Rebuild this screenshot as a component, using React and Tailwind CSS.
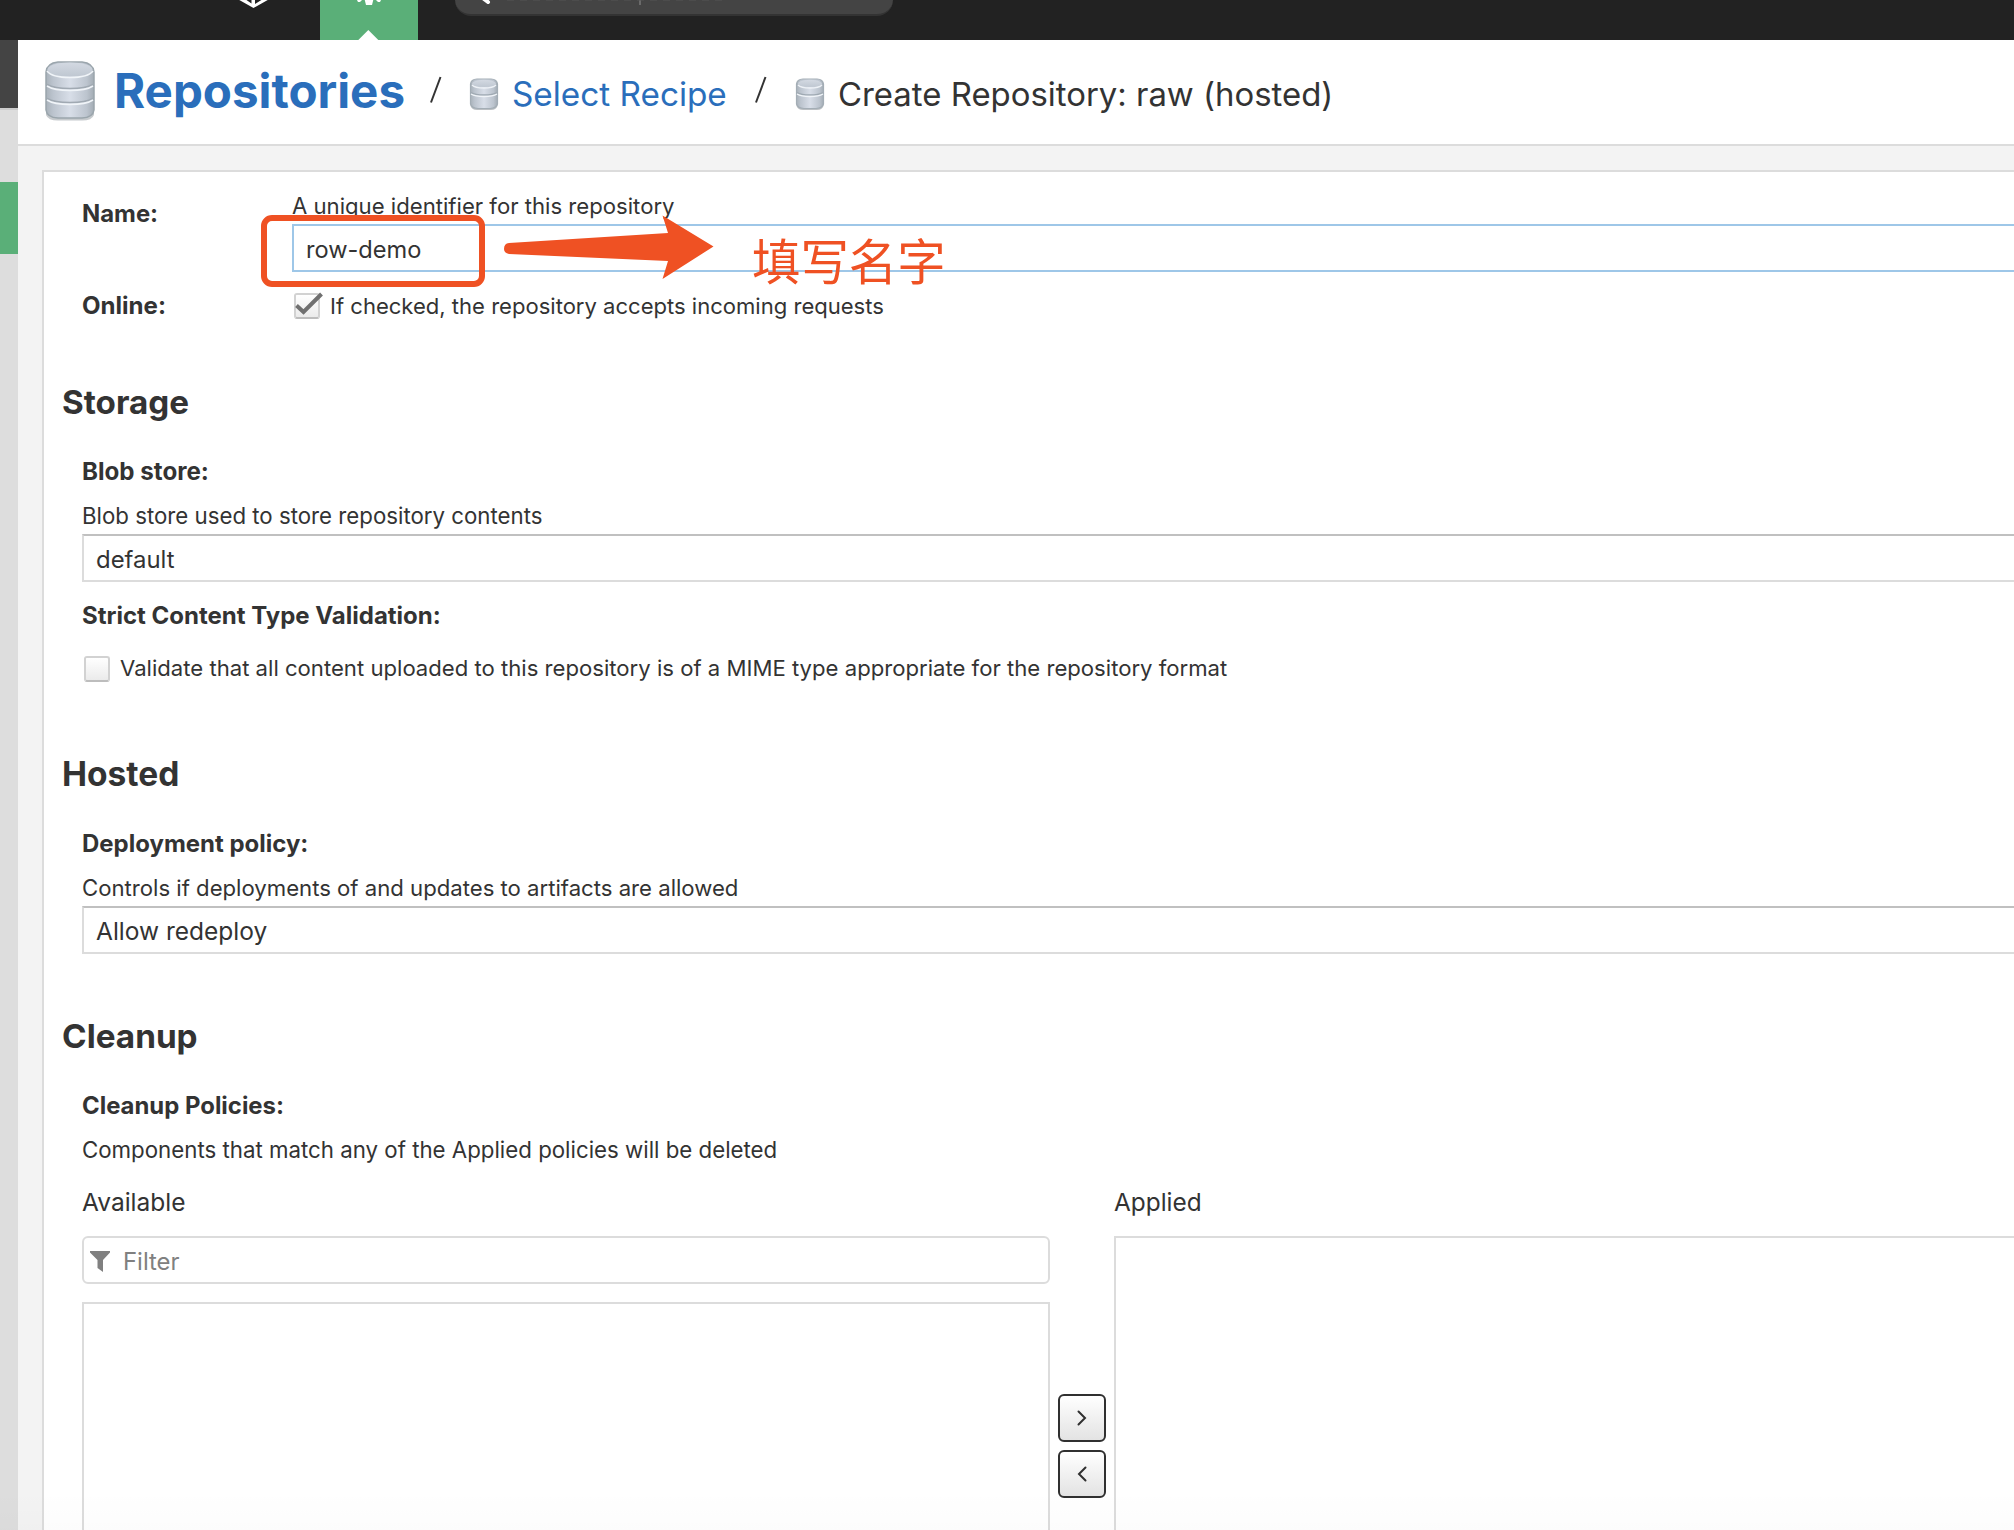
import React from "react";

function Database({ className, bands = 3 }) {
  const three = bands === 3;
  return three ? (
    <svg className={className} viewBox="0 0 52 62" fill="none">
      <defs>
        <linearGradient id="dbBody" x1="0" x2="1" y1="0" y2="0">
          <stop offset="0" stopColor="#a9b2ba" />
          <stop offset="0.15" stopColor="#bcc4ce" />
          <stop offset="0.5" stopColor="#d8dee8" />
          <stop offset="0.85" stopColor="#bcc4ce" />
          <stop offset="1" stopColor="#a3acb4" />
        </linearGradient>
        <linearGradient id="dbTop" x1="0" x2="0" y1="0" y2="1">
          <stop offset="0" stopColor="#d3d9e2" />
          <stop offset="1" stopColor="#bfc7d1" />
        </linearGradient>
      </defs>
      <path d="M2 50 H50 V55 Q48 60.500 38 60.500 H14 Q4 60.500 2 55Z" fill="#8d959b" opacity="0.5" />
      <path d="M2 12 Q3 3 14 2 H38 Q49 3 50 12 V50 Q49 57.500 38 58 H14 Q3 57.500 2 50Z" fill="url(#dbBody)" stroke="#9aa5ac" strokeWidth="1.500" />
      <ellipse cx="26" cy="9.500" rx="22.500" ry="7" fill="url(#dbTop)" />
      <path d="M3 11 Q8 17.500 26 17.500 Q44 17.500 49 11" stroke="#f0f4f8" strokeWidth="1.600" />
      <path d="M3 24.500 Q10 28.500 26 28.500 Q42 28.500 49 24.500" stroke="#a0a9b2" strokeWidth="1.600" />
      <path d="M3 26 Q10 30.500 26 30.500 Q42 30.500 49 26" stroke="#f0f4f8" strokeWidth="1.600" />
      <path d="M3 38.500 Q10 42.500 26 42.500 Q42 42.500 49 38.500" stroke="#a0a9b2" strokeWidth="1.600" />
      <path d="M3 40 Q10 44.500 26 44.500 Q42 44.500 49 40" stroke="#f0f4f8" strokeWidth="1.600" />
    </svg>
  ) : (
    <svg className={className} viewBox="0 0 30 33" fill="none">
      <path d="M1.500 26 H28.500 V28 Q27 32 22 32 H8 Q3 32 1.500 28Z" fill="#8d959b" opacity="0.6" />
      <path d="M1.500 6 Q2 1.200 8 1 H22 Q28 1.200 28.500 6 V26 Q27 30.500 21 30.500 H9 Q3 30.500 1.500 26Z" fill="url(#dbBody)" stroke="#a3adb5" strokeWidth="1.200" />
      <ellipse cx="15" cy="5.500" rx="12" ry="3.600" fill="url(#dbTop)" />
      <path d="M3 7 Q6 10 15 10 Q24 10 27 7" stroke="#edf1f6" strokeWidth="1.300" />
      <path d="M2 14.500 Q6 17 15 17 Q24 17 28 14.500" stroke="#9fa9b2" strokeWidth="1.300" />
      <path d="M2 16 Q6 18.500 15 18.500 Q24 18.500 28 16" stroke="#f0f4f8" strokeWidth="1.400" />
    </svg>
  );
}

function Checkbox({ checked }) {
  return (
    <span className="relative block size-[26px] shrink-0 rounded-[3px] border-2 border-[#d2d2d2] border-b-[#bdbdbd] bg-linear-to-b from-white to-[#ebebeb]">
      {checked && (
        <svg className="absolute -left-[2px] -top-[3px] h-[28px] w-[30px]" viewBox="0 0 30 28" fill="none">
          <path d="M2.500 13.500 L9.500 20 L27.500 2" stroke="#707070" strokeWidth="4" />
        </svg>
      )}
    </span>
  );
}

function Heading({ children, className }) {
  return <h2 className={`-ml-5 h-10 whitespace-nowrap font-bold leading-10 ${className}`}>{children}</h2>;
}

function Label({ children, className }) {
  return <div className={`h-8 whitespace-nowrap font-bold leading-8 ${className}`}>{children}</div>;
}

function Help({ children, className }) {
  return <div className={`h-8 whitespace-nowrap leading-8 ${className}`}>{children}</div>;
}

function Field({ children, focused, className }) {
  const border = focused ? "border-[#9ec7e8]" : "border-[#dcdcdc] border-t-[#c0c0c0]";
  return (
    <div className={`flex h-12 items-center whitespace-nowrap border-2 border-r-0 pl-3 pt-[3px] ${border} ${className}`}>
      {children}
    </div>
  );
}

function Slash() {
  return (
    <svg className="mt-[36px] h-7 w-3" viewBox="0 0 12 28">
      <path d="M1 26.500 L10.500 1" stroke="#333" strokeWidth="2" />
    </svg>
  );
}

function MoveButton({ d }) {
  return (
    <button className="flex size-12 items-center justify-center rounded-[6px] border-2 border-[#303030] bg-linear-to-b from-white to-[#e3e3e3]">
      <svg className="size-4" viewBox="0 0 16 16" fill="none">
        <path d={d} stroke="#303030" strokeWidth="2" strokeLinecap="round" />
      </svg>
    </button>
  );
}

export default function App() {
  return (
    <div className="relative flex h-[1530px] w-[2014px] flex-col overflow-hidden bg-[#f3f3f3] font-['Inter',sans-serif] text-[#333333]">
      <header className="flex h-10 shrink-0 items-start bg-[#222222]">
        <svg className="ml-[236px] h-10 w-9" viewBox="0 0 36 40" fill="none">
          <path d="M1.500 -1 L17.500 8 L33.500 -1 H27 L19 4 V-1 H15.500 V3.500 L9 -1Z" fill="#fff" />
        </svg>
        <div className="ml-12 h-10 w-[98px] bg-[#5aaf78]">
          <svg className="h-10 w-[98px]" viewBox="0 0 98 40" fill="#fff">
            <path d="M44.500 -1 H53.500 L52 5 H46Z" />
            <path d="M37 0 h5 l-2 2 h-2z M61 0 h-5 l2 2 h2z" />
            <path d="M48.300 30 L58.300 40 H38.300Z" />
          </svg>
        </div>
        <div className="ml-[37px] flex h-4 w-[438px] rounded-b-[22px] border-b-2 border-[#333333] bg-[#444444]">
          <svg className="h-[14px] w-full" viewBox="0 0 438 14" fill="none">
            <path d="M29 -1 L33 2" stroke="#fff" strokeWidth="4" strokeLinecap="round" />
            <path d="M185 0 V5" stroke="#777" strokeWidth="1.500" />
            <path d="M52 0 H271" stroke="#555" strokeWidth="1" strokeDasharray="7 6" />
          </svg>
        </div>
      </header>

      <div className="flex min-h-0 flex-1">
        <aside className="flex w-[18px] shrink-0 flex-col bg-[#dddddd]">
          <div className="h-[68px] bg-[#444444]" />
          <div className="h-0.5 bg-[#cccccc]" />
          <div className="mt-[72px] h-[72px] bg-[#5aaf78]" />
        </aside>

        <main className="flex min-w-0 flex-1 flex-col">
          <div className="flex h-[106px] shrink-0 border-b-2 border-[#dcdcdc] bg-white">
            <Database className="ml-[26px] mt-[20px] h-[62px] w-[52px]" />
            <h1 className="ml-[18px] mt-[23px] w-[291px] whitespace-nowrap text-[47.5px] font-bold leading-[56px] text-[#2a6ebb]">Repositories</h1>
            <div className="ml-[25px]"><Slash /></div>
            <Database bands={2} className="ml-[27px] mt-[38px] h-[33px] w-[30px]" />
            <span className="ml-[13px] mt-[34px] w-[216px] whitespace-nowrap text-[33.3px] leading-10 text-[#2a6ebb]">Select Recipe</span>
            <div className="ml-[27px]"><Slash /></div>
            <Database bands={2} className="ml-[28px] mt-[38px] h-[33px] w-[30px]" />
            <span className="ml-[13px] mt-[34px] whitespace-nowrap text-[32.9px] leading-10">Create Repository: raw (hosted)</span>
          </div>

          <section className="ml-6 mt-6 flex-1 border-l-2 border-t-2 border-[#dcdcdc] bg-white pl-[38px]">
            <div className="relative flex">
              <Label className="mt-[26px] w-[210px] text-[23.9px]">Name:</Label>
              <div className="flex-1 pt-[18px]">
                <Help className="text-[22.15px]">A unique identifier for this repository</Help>
                <Field focused className="mt-0.5 text-[23.6px]">row-demo</Field>
              </div>
              <div className="absolute left-[179px] top-[43px] h-[72px] w-[224px] rounded-[11px] border-[6px] border-[#ef5123]" />
              <svg className="absolute left-[422px] top-[43px] h-[66px] w-[210px]" viewBox="0 0 210 66" fill="#ef5123">
                <path d="M5 28 L164 18 L158.500 0.500 L209.500 31.500 L158.500 64 L164 46 L5 39 Q0 38 0 34 Q0 28.500 5 28Z" />
              </svg>
              <div className="absolute left-[670px] top-[59px] whitespace-nowrap font-['Noto_Sans_CJK_SC',sans-serif] text-[48.4px] leading-[56px] text-[#ef5123]">填写名字</div>
            </div>
            <div className="mt-[18px] flex h-8">
              <Label className="w-[210px] text-[24.1px]">Online:</Label>
              <div className="flex">
                <div className="ml-0.5 mt-[3px]"><Checkbox checked /></div>
                <Help className="ml-2.5 text-[22.05px]">If checked, the repository accepts incoming requests</Help>
              </div>
            </div>

            <Heading className="mt-[60px] text-[33.2px]">Storage</Heading>
            <Label className="mt-[34px] text-[24.15px]">Blob store:</Label>
            <Help className="mt-[12px] text-[22.25px]">Blob store used to store repository contents</Help>
            <Field className="mt-[2px] text-[23.9px]">default</Field>
            <Label className="mt-[18px] text-[24px]">Strict Content Type Validation:</Label>
            <div className="mt-5 flex h-8">
              <div className="ml-0.5 mt-1"><Checkbox /></div>
              <Help className="ml-2.5 text-[22.14px]">Validate that all content uploaded to this repository is of a MIME type appropriate for the repository format</Help>
            </div>

            <Heading className="mt-[70px] text-[33.5px]">Hosted</Heading>
            <Label className="mt-[34px] text-[23.97px]">Deployment policy:</Label>
            <Help className="mt-[12px] text-[22.15px]">Controls if deployments of and updates to artifacts are allowed</Help>
            <Field className="mt-[2px] text-[24.5px]">Allow redeploy</Field>

            <Heading className="mt-[62px] text-[33.3px]">Cleanup</Heading>
            <Label className="mt-[34px] text-[23.9px]">Cleanup Policies:</Label>
            <Help className="mt-[12px] text-[22.28px]">Components that match any of the Applied policies will be deleted</Help>

            <div className="mt-5 flex">
              <div className="w-[968px]">
                <Help className="text-[24.5px]">Available</Help>
                <div className="mt-[18px] flex h-12 items-center rounded-[6px] border-2 border-[#dcdcdc] pl-1.5">
                  <svg className="mt-1 h-[22px] w-5" viewBox="0 0 20 22" fill="#808080"><path d="M0 0 H20 V1.500 L13 9 V21 L7.500 17 V9 L0 1.500Z" /></svg>
                  <span className="ml-[13px] mt-[3px] text-[23.9px] text-[#808080]">Filter</span>
                </div>
                <div className="mt-[18px] h-[260px] border-2 border-[#dcdcdc]" />
              </div>
              <div className="mx-2 mt-[208px] flex flex-col gap-2">
                <MoveButton d="M4.500 1.500 L11 8 L4.500 14.500" />
                <MoveButton d="M11.500 1.500 L5 8 L11.500 14.500" />
              </div>
              <div className="flex-1">
                <Help className="text-[24.4px]">Applied</Help>
                <div className="mt-[18px] h-[326px] border-l-2 border-t-2 border-[#dcdcdc]" />
              </div>
            </div>
          </section>
        </main>
      </div>
      <div className="absolute inset-x-0 bottom-0 h-10 bg-linear-to-b from-transparent to-black/[0.012]" />
    </div>
  );
}
